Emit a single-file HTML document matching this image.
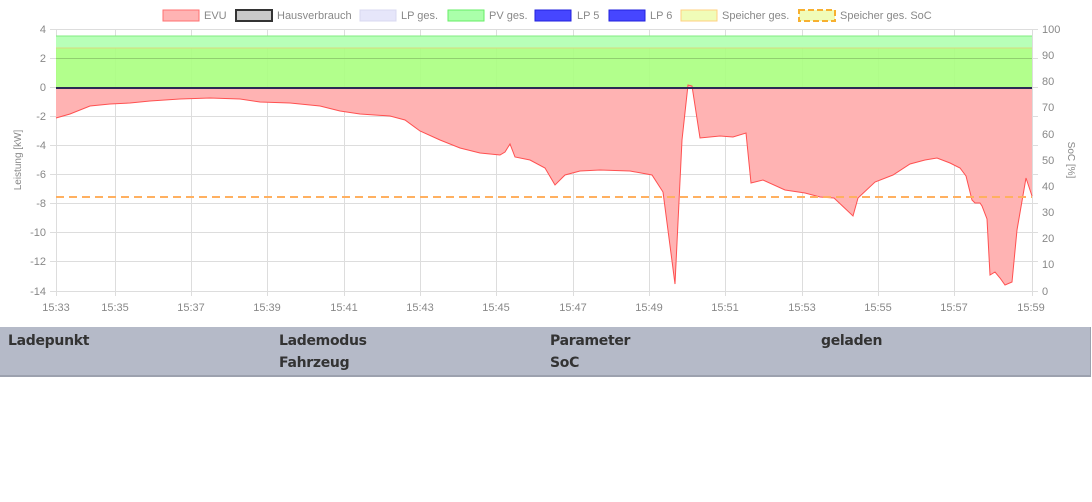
<!DOCTYPE html>
<html><head><meta charset="utf-8"><style>
body{margin:0;background:#fff;width:1092px;height:502px;overflow:hidden;font-family:"Liberation Sans",sans-serif}
.tbl{position:absolute;left:0;top:327px;width:1090px;height:48px;background:#b5bac8;border-bottom:2px solid #9ca1ae;border-right:1px solid #9ca1ae}
.tbl span{position:absolute;font-weight:bold;font-size:14px;color:#333;font-family:"DejaVu Sans","Liberation Sans",sans-serif;letter-spacing:-0.3px}
</style></head><body>
<svg width="1092" height="330" style="position:absolute;left:0;top:0" font-family="Liberation Sans" font-size="11" fill="#888">
<g font-size="11" fill="#888">
<rect x="163" y="10" width="36" height="11" fill="#ffb3b3" stroke="#ff7070"/><text x="204" y="19">EVU</text>
<rect x="236" y="10" width="36" height="11" fill="#c8c8c8" stroke="#333" stroke-width="2"/><text x="277" y="19">Hausverbrauch</text>
<rect x="360" y="10" width="36" height="11" fill="#e6e6fa" stroke="#d8d8f0"/><text x="401" y="19">LP ges.</text>
<rect x="448" y="10" width="36" height="11" fill="#aaffaa" stroke="#66ee66"/><text x="489" y="19">PV ges.</text>
<rect x="535" y="10" width="36" height="11" fill="#4646ff" stroke="#2222dd"/><text x="577" y="19">LP 5</text>
<rect x="609" y="10" width="36" height="11" fill="#4646ff" stroke="#2222dd"/><text x="650" y="19">LP 6</text>
<rect x="681" y="10" width="36" height="11" fill="#f0fcb8" stroke="#ffd080"/><text x="722" y="19">Speicher ges.</text>
<rect x="799" y="10" width="36" height="11" fill="#f0fcb8" stroke="#f7b030" stroke-width="2" stroke-dasharray="6,3"/><text x="840" y="19">Speicher ges. SoC</text>
</g>
<g stroke="#ddd" stroke-width="1">
<line x1="50" y1="29.5" x2="1038" y2="29.5"/><line x1="50" y1="58.5" x2="1038" y2="58.5"/><line x1="50" y1="87.5" x2="1038" y2="87.5"/>
<line x1="50" y1="116.5" x2="1038" y2="116.5"/><line x1="50" y1="145.5" x2="1038" y2="145.5"/><line x1="50" y1="174.5" x2="1038" y2="174.5"/>
<line x1="50" y1="203.5" x2="1038" y2="203.5"/><line x1="50" y1="232.5" x2="1038" y2="232.5"/><line x1="50" y1="261.5" x2="1038" y2="261.5"/>
<line x1="50" y1="291.5" x2="1038" y2="291.5"/>
<line x1="56.5" y1="29" x2="56.5" y2="296"/><line x1="1032.5" y1="29" x2="1032.5" y2="296"/>
<line x1="115.5" y1="29" x2="115.5" y2="296"/><line x1="191.5" y1="29" x2="191.5" y2="296"/><line x1="267.5" y1="29" x2="267.5" y2="296"/>
<line x1="344.5" y1="29" x2="344.5" y2="296"/><line x1="420.5" y1="29" x2="420.5" y2="296"/><line x1="496.5" y1="29" x2="496.5" y2="296"/>
<line x1="573.5" y1="29" x2="573.5" y2="296"/><line x1="649.5" y1="29" x2="649.5" y2="296"/><line x1="725.5" y1="29" x2="725.5" y2="296"/>
<line x1="802.5" y1="29" x2="802.5" y2="296"/><line x1="878.5" y1="29" x2="878.5" y2="296"/><line x1="954.5" y1="29" x2="954.5" y2="296"/>
</g>
<rect x="56" y="36" width="976" height="51" fill="#aaff80" fill-opacity="0.9"/>
<rect x="56" y="36" width="976" height="12" fill="#b8ffb8"/>
<line x1="56" y1="36" x2="1032" y2="36" stroke="#80ee80"/>
<line x1="56" y1="48" x2="1032" y2="48" stroke="#d8d880"/>
<line x1="56" y1="58.5" x2="1032" y2="58.5" stroke="#90d070"/>
<path d="M56,88 L56,118 70,114 90,106 110,104 130,103 150,101 180,99 210,98 240,99 260,102 290,103 320,106 340,111 360,114 390,116 405,120 420,131 440,140 460,148 480,153 500,155 505,152 510,144 515,157 530,160 545,168 555,185 565,175 580,171 600,170 630,171 652,175 663,192 675,284 682,140 688,85 692,86 700,138 720,136 733,137 746,133 751,183 763,180 785,190 805,193 820,197 834,198 853,216 858,198 875,182 893,175 910,164 925,160 937,158 950,163 960,168 966,176 972,200 975,203 980,203 982,206 987,219 990,275 995,272 1000,278 1005,285 1012,282 1017,230 1026,178 1032,196 L1032,88 Z" fill="#ffb3b3"/>
<path d="M56,118 70,114 90,106 110,104 130,103 150,101 180,99 210,98 240,99 260,102 290,103 320,106 340,111 360,114 390,116 405,120 420,131 440,140 460,148 480,153 500,155 505,152 510,144 515,157 530,160 545,168 555,185 565,175 580,171 600,170 630,171 652,175 663,192 675,284 682,140 688,85 692,86 700,138 720,136 733,137 746,133 751,183 763,180 785,190 805,193 820,197 834,198 853,216 858,198 875,182 893,175 910,164 925,160 937,158 950,163 960,168 966,176 972,200 975,203 980,203 982,206 987,219 990,275 995,272 1000,278 1005,285 1012,282 1017,230 1026,178 1032,196" fill="none" stroke="#ff5050" stroke-width="1"/>
<line x1="56" y1="88" x2="1032" y2="88" stroke="#2a2a55" stroke-width="2"/>
<line x1="56" y1="197" x2="1032" y2="197" stroke="#ffb060" stroke-width="2" stroke-dasharray="8,5"/>
<g text-anchor="end">
<text x="46" y="33">4</text><text x="46" y="62">2</text><text x="46" y="91">0</text><text x="46" y="120">-2</text><text x="46" y="149">-4</text>
<text x="46" y="178">-6</text><text x="46" y="207">-8</text><text x="46" y="236">-10</text><text x="46" y="265">-12</text><text x="46" y="295">-14</text>
</g>
<g text-anchor="start">
<text x="1042" y="33">100</text><text x="1042" y="59">90</text><text x="1042" y="85">80</text><text x="1042" y="111">70</text><text x="1042" y="138">60</text>
<text x="1042" y="164">50</text><text x="1042" y="190">40</text><text x="1042" y="216">30</text><text x="1042" y="242">20</text><text x="1042" y="268">10</text><text x="1042" y="295">0</text>
</g>
<g text-anchor="middle">
<text x="56" y="311">15:33</text><text x="115" y="311">15:35</text><text x="191" y="311">15:37</text><text x="267" y="311">15:39</text>
<text x="344" y="311">15:41</text><text x="420" y="311">15:43</text><text x="496" y="311">15:45</text><text x="573" y="311">15:47</text>
<text x="649" y="311">15:49</text><text x="725" y="311">15:51</text><text x="802" y="311">15:53</text><text x="878" y="311">15:55</text>
<text x="954" y="311">15:57</text><text x="1031" y="311">15:59</text>
</g>
<text transform="translate(21,160) rotate(-90)" text-anchor="middle" font-size="10">Leistung [kW]</text>
<text transform="translate(1068,160) rotate(90)" text-anchor="middle" font-size="10">SoC [%]</text>
</svg>
<div class="tbl">
<span style="left:8px;top:6px">Ladepunkt</span>
<span style="left:279px;top:6px">Lademodus</span>
<span style="left:279px;top:28px">Fahrzeug</span>
<span style="left:550px;top:6px">Parameter</span>
<span style="left:550px;top:28px">SoC</span>
<span style="left:821px;top:6px">geladen</span>
</div>
</body></html>
